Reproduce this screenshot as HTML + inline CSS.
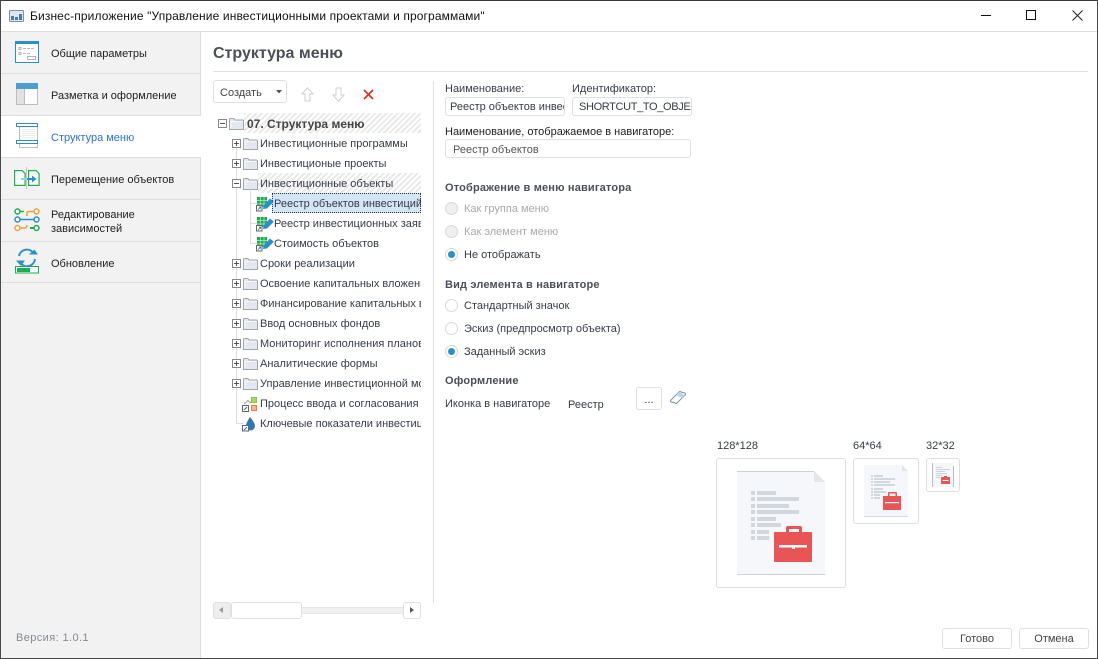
<!DOCTYPE html>
<html lang="ru"><head><meta charset="utf-8"><title>Бизнес-приложение</title>
<style>
html,body{margin:0;padding:0;width:1098px;height:659px;overflow:hidden;background:#fff}
body{font-family:"Liberation Sans",sans-serif;font-size:11px;color:#363b46;position:relative}
.t{position:absolute;white-space:nowrap;line-height:14px}
.b{position:absolute;box-sizing:border-box}
.clip{overflow:hidden}
svg{position:absolute;overflow:visible}
.hatch{background:repeating-linear-gradient(135deg,#e9e9e9 0 2px,#fff 2px 4px)}
.inp{position:absolute;box-sizing:border-box;border:1px solid #dfdfdf;border-radius:3px;background:#fff;white-space:nowrap;overflow:hidden;line-height:19px}
.r{position:absolute;box-sizing:border-box;width:13px;height:13px;border-radius:50%;border:1px solid #d9d9d9;background:#fff}
.r.d{background:#efefef}
.r.c::after{content:"";position:absolute;left:2px;top:2px;width:7px;height:7px;border-radius:50%;background:#2a8fcf}
.h{font-weight:bold;color:#4a4f58;letter-spacing:.17px}
.pm{position:absolute;box-sizing:border-box;width:9px;height:9px;border:1px solid #8a8a8a;background:#fff}
.pm::before{content:"";position:absolute;left:1px;top:3px;width:5px;height:1px;background:#555}
.pm.p::after{content:"";position:absolute;left:3px;top:1px;width:1px;height:5px;background:#555}
.btn{position:absolute;box-sizing:border-box;border:1px solid #dfdfdf;border-radius:3px;background:#fff;text-align:center}
</style></head><body>

<!-- window frame -->
<div class="b" style="left:0;top:0;width:1098px;height:1px;background:#3a3a3a"></div>
<div class="b" style="left:0;top:0;width:1px;height:659px;background:#4a4a4a"></div>
<div class="b" style="left:1097px;top:0;width:1px;height:659px;background:#4a4a4a"></div>
<div class="b" style="left:0;top:658px;width:1098px;height:1px;background:#4a4a4a"></div>

<!-- title bar -->
<svg style="left:9px;top:10px" width="16" height="13" viewBox="0 0 16 13">
<rect x=".5" y=".5" width="14" height="11" rx="1" fill="#dfe6ef" stroke="#7b8fae"/>
<rect x="2" y="6" width="3" height="4" fill="#4d79a8"/><rect x="6" y="7" width="3" height="3" fill="#4d79a8"/><rect x="10" y="4" width="3" height="6" fill="#4d79a8"/>
</svg>
<div class="t" style="left:30px;top:9px;font-size:12px;color:#111;letter-spacing:.12px">Бизнес-приложение "Управление инвестиционными проектами и программами"</div>
<div class="b" style="left:981px;top:15px;width:10px;height:1px;background:#111"></div>
<div class="b" style="left:1026px;top:10px;width:10px;height:10px;border:1px solid #111"></div>
<svg style="left:1072px;top:10px" width="11" height="11" viewBox="0 0 11 11"><path d="M.5.5l10 10M10.500.5l-10 10" stroke="#222" fill="none"/></svg>
<div class="b" style="left:1px;top:31px;width:1096px;height:1px;background:#dedede"></div>

<!-- sidebar -->
<div class="b" style="left:1px;top:32px;width:199px;height:626px;background:#f2f2f2"></div>
<div class="b" style="left:200px;top:32px;width:1px;height:626px;background:#dedede"></div>
<div class="b" style="left:1px;top:73px;width:199px;height:1px;background:#dedede"></div>
<div class="b" style="left:1px;top:115px;width:200px;height:43px;background:#fff;border-top:1px solid #dedede;border-bottom:1px solid #dedede"></div>
<div class="b" style="left:1px;top:199px;width:199px;height:1px;background:#dedede"></div>
<div class="b" style="left:1px;top:241px;width:199px;height:1px;background:#dedede"></div>
<div class="b" style="left:1px;top:282px;width:199px;height:1px;background:#dedede"></div>

<div class="t" style="left:51px;top:47px;color:#222">Общие параметры</div>
<div class="t" style="left:51px;top:89px;color:#222">Разметка и оформление</div>
<div class="t" style="left:51px;top:131px;color:#2f6fe0">Структура меню</div>
<div class="t" style="left:51px;top:173px;color:#222">Перемещение объектов</div>
<div class="t" style="left:51px;top:208px;color:#222">Редактирование</div>
<div class="t" style="left:51px;top:222px;color:#222">зависимостей</div>
<div class="t" style="left:51px;top:257px;color:#222">Обновление</div>
<div class="t" style="left:16px;top:631px;color:#868a92;letter-spacing:.4px">Версия: 1.0.1</div>

<!-- sidebar icons -->
<svg style="left:15px;top:41px" width="24" height="22" viewBox="0 0 24 22">
<rect x=".5" y=".5" width="23" height="21" fill="#fff" stroke="#2a8fcf"/><rect x="0" y="0" width="24" height="3" fill="#2a8fcf"/>
<path d="M4 6.500h2v2H4zM4 11.500h2v2H4z" fill="none" stroke="#b5b5b5"/><path d="M8 7.500h3M12 7.500h3M16 7.500h3M8 12.500h3M12 12.500h3" stroke="#b5b5b5"/><rect x="12.500" y="15.500" width="8" height="3" fill="none" stroke="#b5b5b5"/>
</svg>
<svg style="left:16px;top:83px" width="22" height="22" viewBox="0 0 22 22">
<rect x=".5" y=".5" width="21" height="21" fill="#fff" stroke="#bdbdbd"/><rect x="1" y="6" width="8" height="15" fill="#e2e2e2"/><path d="M8.500 6v15" stroke="#bdbdbd"/><rect x="0" y="0" width="22" height="6" fill="#4aa0d4"/>
</svg>
<svg style="left:16px;top:123px" width="22" height="25" viewBox="0 0 22 25">
<rect x="3.500" y="3" width="18" height="21.500" fill="#fff" stroke="#bdbdbd"/><path d="M6 6.500h13M6 8.500h13M6 10.500h13M6 12.500h13M6 14.500h13" stroke="#ececec"/>
<rect x=".5" y=".5" width="21" height="3" fill="#fff" stroke="#2a8fcf"/><rect x=".5" y="17.500" width="21" height="3" fill="#fff" stroke="#2a8fcf"/>
</svg>
<svg style="left:14px;top:170px" width="26" height="20" viewBox="0 0 26 20">
<path d="M.600 .6h7.500l3 3v11.800H.600zM14.600 .6h7.500l3 3v11.800H14.600z" fill="#fff" stroke="#1fae4f" stroke-width="1.200"/><path d="M12.500 -3v22" stroke="#c9c9c9"/><path d="M7 9h6" stroke="#9fd0ee" stroke-width="2"/><path d="M13 9h6" stroke="#2a8fcf" stroke-width="2"/><path d="M18 5.500l4.500 3.500-4.500 3.500z" fill="#2a8fcf"/>
</svg>
<svg style="left:14px;top:207px" width="26" height="26" viewBox="0 0 26 26">
<g fill="#fff" stroke-width="1.500">
<circle cx="3.500" cy="4.500" r="2.500" stroke="#1fae4f"/><path d="M6 4.500h4" stroke="#1fae4f"/><circle cx="22.500" cy="4.500" r="2.500" stroke="#f0a030"/><path d="M13 9V6.500Q13 4.500 15 4.500h5" stroke="#f0a030" fill="none"/>
<circle cx="3.500" cy="12.500" r="2.500" stroke="#2a8fcf"/><circle cx="22.500" cy="12.500" r="2.500" stroke="#2a8fcf"/><path d="M6 12.500h14" stroke="#2a8fcf"/>
<circle cx="3.500" cy="21" r="2.500" stroke="#f0a030"/><path d="M6 21h4q3 0 3-3" stroke="#f0a030" fill="none"/><circle cx="22.500" cy="21" r="2.500" stroke="#1fae4f"/><path d="M16 21h4" stroke="#1fae4f" stroke-width="2"/>
</g></svg>
<svg style="left:15px;top:248px" width="24" height="27" viewBox="0 0 24 27">
<rect x=".5" y="18.500" width="23" height="6.500" fill="#fff" stroke="#1fae4f"/><rect x="2" y="20" width="13" height="4" fill="#1fae4f"/>
<path d="M4 8A8 8 0 0 1 18 4.500" fill="none" stroke="#2a8fcf" stroke-width="2"/><path d="M14 6.500h9l-3.500-5z" fill="#2a8fcf"/>
<path d="M20 11A8 8 0 0 1 6 15.500" fill="none" stroke="#2a8fcf" stroke-width="2"/><path d="M1 12.500h9L6 18z" fill="#2a8fcf"/>
</svg>

<!-- heading -->
<div class="t" style="left:213px;top:44px;font-size:16px;line-height:19px;font-weight:bold;color:#4a4f58">Структура меню</div>
<div class="b" style="left:213px;top:71px;width:875px;height:1px;background:#e0e0e0"></div>
<div class="b" style="left:433px;top:81px;width:1px;height:522px;background:#e0e0e0"></div>

<!-- toolbar -->
<div class="btn" style="left:213px;top:80px;width:74px;height:23px"></div>
<div class="t" style="left:220px;top:86px;color:#444">Создать</div>
<svg style="left:276px;top:90px" width="7" height="4"><path d="M0 0h6L3 3.500z" fill="#555"/></svg>
<svg style="left:301px;top:87px" width="13" height="15" viewBox="0 0 13 15"><path d="M6.500.7L12 7H9v7H4V7H1z" fill="#fff" stroke="#cfcfcf"/></svg>
<svg style="left:332px;top:87px" width="13" height="15" viewBox="0 0 13 15"><path d="M6.500 14.300L12 8H9V1H4v7H1z" fill="#fff" stroke="#cfcfcf"/></svg>
<svg style="left:363px;top:89px" width="11" height="11" viewBox="0 0 11 11"><path d="M1 1l9 9M10 1l-9 9" stroke="#e32b2b" stroke-width="1.600" fill="none"/></svg>

<!-- tree -->
<div class="b hatch" style="left:244px;top:113px;width:177px;height:20px"></div>
<div class="b hatch" style="left:258px;top:173px;width:163px;height:20px"></div>
<svg style="left:213px;top:113px" width="40" height="330"><g stroke="#dcdcdc" fill="none">
<path d="M23.500 26V310.500h7"/><path d="M37.500 78V130.500h7"/><path d="M37.500 110.500h7M37.500 90.500h7"/></g></svg>

<div class="pm" style="left:218px;top:119px"></div>
<div class="pm p" style="left:232px;top:139px"></div>
<div class="pm p" style="left:232px;top:159px"></div>
<div class="pm" style="left:232px;top:179px"></div>
<div class="pm p" style="left:232px;top:259px"></div>
<div class="pm p" style="left:232px;top:279px"></div>
<div class="pm p" style="left:232px;top:299px"></div>
<div class="pm p" style="left:232px;top:319px"></div>
<div class="pm p" style="left:232px;top:339px"></div>
<div class="pm p" style="left:232px;top:359px"></div>
<div class="pm p" style="left:232px;top:379px"></div>

<svg width="0" height="0" style="left:0;top:0"><defs>
<symbol id="f" viewBox="0 0 15 12"><path d="M.5 11.500V1.500q0-1 1-1h3.500l1 1.500h7.500q1 0 1 1v8.500z" fill="#e4e8ee" stroke="#a0a6b0"/><path d="M2 10.500V3.500h11.500" fill="none" stroke="#f6f7f9"/></symbol>
<symbol id="g" viewBox="0 0 18 18"><rect x="1" y="1" width="10" height="10" fill="#1fae4f"/><path d="M4.500 1v10M8 1v10M1 4.500h10M1 8h10" stroke="#bfe9cd" stroke-width=".7"/><path d="M7 13L8 9l6-6.500 3.800 3.300L11 12.500z" fill="#2a8fcf"/><rect x=".5" y="9.500" width="5.500" height="5.500" fill="#fff" stroke="#666"/><path d="M2 14l2.500-3M2.800 11h1.800v1.800" stroke="#2a6fb0" fill="none" stroke-width=".8"/></symbol>
</defs></svg>
<svg style="left:229px;top:118px" width="15" height="12"><use href="#f" width="15" height="12"/></svg>
<svg style="left:243px;top:138px" width="15" height="12"><use href="#f" width="15" height="12"/></svg>
<svg style="left:243px;top:158px" width="15" height="12"><use href="#f" width="15" height="12"/></svg>
<svg style="left:243px;top:178px" width="15" height="12"><use href="#f" width="15" height="12"/></svg>
<svg style="left:243px;top:258px" width="15" height="12"><use href="#f" width="15" height="12"/></svg>
<svg style="left:243px;top:278px" width="15" height="12"><use href="#f" width="15" height="12"/></svg>
<svg style="left:243px;top:298px" width="15" height="12"><use href="#f" width="15" height="12"/></svg>
<svg style="left:243px;top:318px" width="15" height="12"><use href="#f" width="15" height="12"/></svg>
<svg style="left:243px;top:338px" width="15" height="12"><use href="#f" width="15" height="12"/></svg>
<svg style="left:243px;top:358px" width="15" height="12"><use href="#f" width="15" height="12"/></svg>
<svg style="left:243px;top:378px" width="15" height="12"><use href="#f" width="15" height="12"/></svg>

<svg style="left:242px;top:396px" width="18" height="18" viewBox="0 0 18 18"><rect x="9.500" y="1.500" width="5" height="5" fill="#a8d468" stroke="#8cc63f"/><rect x="9.500" y="9.500" width="5" height="5" fill="#fbb58a" stroke="#f47b30"/><path d="M2 8l4-3.500L9 7" fill="none" stroke="#999"/><rect x=".5" y="9.500" width="6" height="6" fill="#fff" stroke="#666"/><path d="M2 14l3-3" stroke="#2a6fb0"/></svg>
<svg style="left:242px;top:416px" width="18" height="18" viewBox="0 0 18 18"><path d="M8 1Q13 7 13 10a4.500 4.500 0 0 1-9 0Q4 7 8 1z" fill="#2f78b5"/><rect x=".5" y="9.500" width="6" height="5.500" fill="#fff" stroke="#666"/><path d="M2 14l3-3" stroke="#2a6fb0"/></svg>

<div class="b" style="left:272px;top:193px;width:149px;height:20px;background:#d3e6f5;border:1px dotted #333"></div>
<svg style="left:256px;top:196px" width="18" height="18"><use href="#g" width="18" height="18"/></svg>
<svg style="left:256px;top:216px" width="18" height="18"><use href="#g" width="18" height="18"/></svg>
<svg style="left:256px;top:236px" width="18" height="18"><use href="#g" width="18" height="18"/></svg>

<div class="clip b" style="left:213px;top:111px;width:208px;height:330px">
<div class="t" style="left:34px;top:6px;font-size:12px;font-weight:bold;color:#444">07. Структура меню</div>
<div class="t" style="left:47px;top:26px">Инвестиционные программы</div>
<div class="t" style="left:47px;top:46px">Инвестиционые проекты</div>
<div class="t" style="left:47px;top:66px">Инвестиционные объекты</div>
<div class="t" style="left:61px;top:86px">Реестр объектов инвестиций</div>
<div class="t" style="left:61px;top:106px">Реестр инвестиционных заявок</div>
<div class="t" style="left:61px;top:126px">Стоимость объектов</div>
<div class="t" style="left:47px;top:146px">Сроки реализации</div>
<div class="t" style="left:47px;top:166px">Освоение капитальных вложений</div>
<div class="t" style="left:47px;top:186px">Финансирование капитальных вложений</div>
<div class="t" style="left:47px;top:206px">Ввод основных фондов</div>
<div class="t" style="left:47px;top:226px">Мониторинг исполнения плановых</div>
<div class="t" style="left:47px;top:246px">Аналитические формы</div>
<div class="t" style="left:47px;top:266px">Управление инвестиционной моделью</div>
<div class="t" style="left:47px;top:286px">Процесс ввода и согласования данных</div>
<div class="t" style="left:47px;top:306px">Ключевые показатели инвестиций</div>
</div>

<!-- scrollbar -->
<div class="b" style="left:213px;top:607px;width:208px;height:7px;border:1px solid #e6e6e6;background:#f0f0f0"></div>
<div class="b" style="left:213px;top:602px;width:18px;height:17px;background:#eee;border:1px solid #e0e0e0;border-radius:3px"></div>
<div class="b" style="left:231px;top:602px;width:71px;height:17px;background:#fff;border:1px solid #e0e0e0;border-radius:3px"></div>
<div class="b" style="left:403px;top:602px;width:18px;height:17px;background:#fff;border:1px solid #e0e0e0;border-radius:3px"></div>
<svg style="left:219px;top:607px" width="5" height="7"><path d="M4 0v6L0 3z" fill="#999"/></svg>
<svg style="left:410px;top:607px" width="5" height="7"><path d="M0 0v6l4-3z" fill="#555"/></svg>

<!-- form -->
<div class="t" style="left:445px;top:82px">Наименование:</div>
<div class="t" style="left:572px;top:82px">Идентификатор:</div>
<div class="inp" style="left:445px;top:97px;width:120px;height:19px;padding-left:4px">Реестр объектов инвестиций</div>
<div class="inp" style="left:572px;top:97px;width:120px;height:19px;padding-left:6px;letter-spacing:-.35px">SHORTCUT_TO_OBJECT</div>
<div class="t" style="left:445px;top:125px;color:#222">Наименование, отображаемое в навигаторе:</div>
<div class="inp" style="left:445px;top:139px;width:246px;height:19px;padding-left:7px;color:#555;line-height:20px">Реестр объектов</div>

<div class="t h" style="left:445px;top:181px">Отображение в меню навигатора</div>
<div class="r d" style="left:445px;top:202px"></div><div class="t" style="left:464px;top:202px;color:#aaa">Как группа меню</div>
<div class="r d" style="left:445px;top:225px"></div><div class="t" style="left:464px;top:225px;color:#aaa">Как элемент меню</div>
<div class="r c" style="left:445px;top:248px"></div><div class="t" style="left:464px;top:248px">Не отображать</div>

<div class="t h" style="left:445px;top:278px">Вид элемента в навигаторе</div>
<div class="r" style="left:445px;top:299px"></div><div class="t" style="left:464px;top:299px">Стандартный значок</div>
<div class="r" style="left:445px;top:322px"></div><div class="t" style="left:464px;top:322px">Эскиз (предпросмотр объекта)</div>
<div class="r c" style="left:445px;top:345px"></div><div class="t" style="left:464px;top:345px">Заданный эскиз</div>

<div class="t h" style="left:445px;top:374px">Оформление</div>
<div class="t" style="left:445px;top:397px">Иконка в навигаторе</div>
<div class="t" style="left:568px;top:398px">Реестр</div>
<div class="btn" style="left:636px;top:387px;width:26px;height:23px;line-height:24px;color:#333">...</div>
<svg style="left:670px;top:390px" width="18" height="16" viewBox="0 0 18 16"><path d="M1 10l8-8q1-1 2 0l4 1q1 1 0 2l-8 8q-1 1-2 0l-4-1q-1-1 0-2z" fill="#fff" stroke="#7a94ad"/><path d="M9 2l6 3-3 3-6-3z" fill="#bcd6ec"/></svg>

<div class="t" style="left:717px;top:439px">128*128</div>
<div class="t" style="left:853px;top:439px">64*64</div>
<div class="t" style="left:926px;top:439px">32*32</div>

<div class="b" style="left:716px;top:458px;width:130px;height:130px;border:1px solid #dedede;border-radius:3px"></div>
<svg style="left:737px;top:471px" width="88" height="104" viewBox="0 0 88 104">
<path d="M0 0h77l11 11v93H0z" fill="#f5f7fa"/><path d="M0 .5h77M0 103.500h88" stroke="#ccd1da" fill="none"/><path d="M77 0l11 11H77z" fill="#e2e6ec"/>
<g fill="#d2d6dd"><rect x="14" y="20" width="4" height="4"/><rect x="20" y="20" width="19" height="4"/><rect x="14" y="26" width="4" height="4"/><rect x="20" y="26" width="42" height="4"/><rect x="14" y="33" width="4" height="4"/><rect x="20" y="33" width="32" height="4"/><rect x="14" y="39" width="4" height="4"/><rect x="20" y="39" width="42" height="4"/><rect x="14" y="46" width="4" height="4"/><rect x="20" y="46" width="19" height="4"/><rect x="14" y="52" width="4" height="4"/><rect x="20" y="52" width="24" height="4"/><rect x="14" y="59" width="4" height="4"/><rect x="20" y="59" width="12" height="4"/><rect x="14" y="65" width="4" height="4"/><rect x="20" y="65" width="12" height="4"/></g>
<path d="M49 61v-4q0-2 2-2h12q2 0 2 2v4h-3v-3h-10v3z" fill="#e95555"/><rect x="37" y="61" width="38" height="30" rx="1" fill="#e95555"/><rect x="42" y="74" width="28" height="2.500" fill="#fff"/><rect x="55" y="74" width="3" height="4" fill="#fff"/>
</svg>

<div class="b" style="left:853px;top:458px;width:66px;height:66px;border:1px solid #dedede;border-radius:3px"></div>
<svg style="left:864px;top:465px" width="44" height="52" viewBox="0 0 44 52">
<path d="M0 0h38l6 6v46H0z" fill="#f5f7fa"/><path d="M0 51.500h44" stroke="#d5d9e0" fill="none"/><path d="M38 0l6 6h-6z" fill="#e2e6ec"/>
<g fill="#d2d6dd"><rect x="7" y="10" width="2" height="2"/><rect x="10" y="10" width="9" height="2"/><rect x="7" y="13" width="2" height="2"/><rect x="10" y="13" width="21" height="2"/><rect x="7" y="16" width="2" height="2"/><rect x="10" y="16" width="16" height="2"/><rect x="7" y="19" width="2" height="2"/><rect x="10" y="19" width="21" height="2"/><rect x="7" y="23" width="2" height="2"/><rect x="10" y="23" width="9" height="2"/><rect x="7" y="26" width="2" height="2"/><rect x="10" y="26" width="12" height="2"/><rect x="7" y="29" width="2" height="2"/><rect x="10" y="29" width="6" height="2"/><rect x="7" y="32" width="2" height="2"/><rect x="10" y="32" width="6" height="2"/></g>
<path d="M24 31v-3q0-1 1-1h7q1 0 1 1v3h-1.500v-2.500h-6V31z" fill="#e95555"/><rect x="19" y="31" width="18" height="14" fill="#e95555"/><rect x="21" y="37" width="14" height="1.200" fill="#fff"/>
</svg>

<div class="b" style="left:926px;top:458px;width:34px;height:34px;border:1px solid #dedede;border-radius:3px"></div>
<svg style="left:932px;top:463px" width="22" height="24" viewBox="0 0 22 24">
<path d="M0 0h19l3 3v21H0z" fill="#f5f7fa"/><path d="M.5 0v24M21.500 3v21" stroke="#b9bec8" fill="none"/>
<path d="M4 4.500h6M4 6.500h14M4 8.500h9M4 10.500h11M4 12.500h6M4 14.500h4" stroke="#cdd1d8"/>
<rect x="9" y="14" width="9" height="7" fill="#e95555"/><rect x="12" y="13" width="3" height="1" fill="#e95555"/><rect x="10.500" y="17" width="6" height="1" fill="#fff"/>
</svg>

<!-- footer -->
<div class="btn" style="left:942px;top:628px;width:70px;height:21px;line-height:21px;color:#444">Готово</div>
<div class="btn" style="left:1019px;top:628px;width:70px;height:21px;line-height:21px;color:#444">Отмена</div>

</body></html>
